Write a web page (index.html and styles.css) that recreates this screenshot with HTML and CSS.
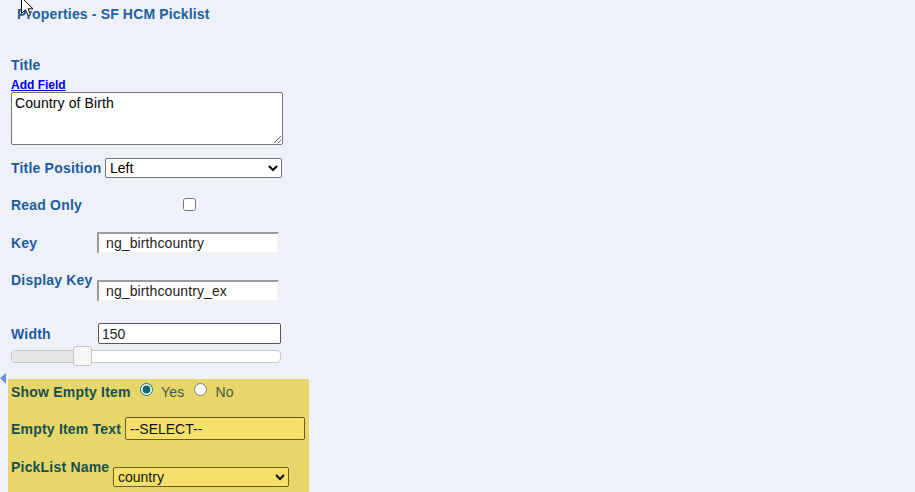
FILE: index.html
```html
<!DOCTYPE html>
<html lang="en">
<head>
  <meta charset="UTF-8">
  <title>Properties - SF HCM Picklist</title>
  <link rel="stylesheet" href="styles.css">
</head>
<body>

  <!-- ponteiro do mouse sobre o título -->
  <svg class="cursor" width="13" height="20" viewBox="0 0 13 20">
    <path d="M0.5 0.5 L0.5 16.5 L4.5 12.8 L7.2 18.8 L9.6 17.8 L7 11.8 L12 11.8 Z" fill="#fff" stroke="#000" stroke-width="1"/>
  </svg>

  <h2 class="panel-title">Properties - SF HCM Picklist</h2>

  <div class="props">
    <div class="lbl">Title</div>
    <a class="add-field" href="#">Add Field</a>
    <textarea class="title-text">Country of Birth</textarea>

    <div class="row row-pos">
      <span class="lbl">Title Position</span>
      <select class="sel-pos">
        <option>Left</option>
        <option>Top</option>
        <option>Right</option>
      </select>
    </div>

    <div class="row row-ro">
      <span class="lbl lbl-ro">Read Only</span>
      <input type="checkbox" class="chk">
    </div>

    <div class="row row-key">
      <span class="lbl lbl-key">Key</span>
      <input type="text" class="inset-input" value="ng_birthcountry">
    </div>

    <div class="row row-dkey">
      <span class="lbl lbl-key">Display Key</span>
      <input type="text" class="inset-input dkey-input" value="ng_birthcountry_ex">
    </div>

    <div class="row row-width">
      <span class="lbl lbl-width">Width</span>
      <input type="text" class="width-input" value="150">
    </div>

    <div class="slider">
      <div class="slider-range" style="width: 62px;"></div>
      <span class="slider-handle" style="left: 61px;"></span>
    </div>
  </div>

  <div class="highlight">
    <span class="toggle-arrow"></span>

    <div class="row row-empty">
      <span class="lbl lbl-empty">Show Empty Item</span>
      <input type="radio" name="empty" class="radio" checked>
      <span class="opt">Yes</span>
      <input type="radio" name="empty" class="radio radio-no">
      <span class="opt">No</span>
    </div>

    <div class="row row-etext">
      <span class="lbl lbl-etext">Empty Item Text</span>
      <input type="text" class="yellow-input" value="--SELECT--">
    </div>

    <div class="row row-plist">
      <span class="lbl lbl-plist">PickList Name</span>
      <select class="yellow-select">
        <option>country</option>
        <option>nationality</option>
      </select>
    </div>
  </div>

</body>
</html>
```

FILE: styles.css
```css
body {
  font-family: 'Liberation Sans', Arial, sans-serif;
  background: #eef2f8;
  color: #000;
  margin: 0;
  padding: 0;
  height: 492px;
  overflow: hidden;
  position: relative;
}

.cursor {
  position: absolute;
  left: 21px;
  top: -3px;
  z-index: 10;
}

.panel-title {
  margin: 0;
  padding: 5px 0 0 17px;
  font-size: 14px;
  line-height: 18px;
  font-weight: bold;
  letter-spacing: 0.15px;
  color: #22609c;
}

/* coluna de propriedades */
.props {
  padding-left: 11px;
  padding-top: 34px;
}

.lbl {
  display: block;
  font-size: 14px;
  line-height: 16px;
  font-weight: bold;
  letter-spacing: 0.2px;
  color: #1e5b9e;
  flex-shrink: 0;
}

.add-field {
  display: block;
  margin-top: 5px;
  height: 14px;
  font-size: 12px;
  line-height: 14px;
  font-weight: bold;
  color: #0000ee;
  text-decoration: underline;
  width: 56px;
}

.title-text {
  display: block;
  box-sizing: border-box;
  width: 272px;
  height: 53px;
  margin: 0;
  padding: 2px 3px;
  border: 1px solid #767676;
  border-radius: 2px;
  font-family: 'Liberation Sans', Arial, sans-serif;
  font-size: 14px;
  letter-spacing: 0.1px;
  background: #fff;
  color: #000;
}

.row {
  display: flex;
  align-items: center;
}

.row-pos {
  margin-top: 13px;
  height: 20px;
}

.row-pos .lbl {
  width: 94px;
}

.sel-pos {
  box-sizing: border-box;
  width: 177px;
  height: 20px;
  margin: 0;
  border: 1px solid #767676;
  border-radius: 2px;
  font-family: 'Liberation Sans', Arial, sans-serif;
  font-size: 14px;
  background: #fff;
  color: #000;
}

.row-ro {
  margin-top: 19px;
  height: 16px;
}

.lbl-ro {
  width: 172px;
}

.chk {
  width: 13px;
  height: 13px;
  margin: -1px 0 0 0;
}

.row-key {
  margin-top: 19px;
  height: 22px;
}

.lbl-key {
  width: 86px;
}

.inset-input {
  box-sizing: border-box;
  width: 182px;
  height: 22px;
  margin: 0;
  padding: 0 0 0 7px;
  border-width: 2px;
  border-style: solid;
  border-color: #9b9b9b #f2f2f2 #f2f2f2 #9b9b9b;
  font-family: 'Liberation Sans', Arial, sans-serif;
  font-size: 14px;
  letter-spacing: 0.1px;
  background: #fff;
  color: #222;
}

.row-dkey {
  margin-top: 18px;
  align-items: flex-start;
}

.dkey-input {
  margin-top: 8px;
}

.row-width {
  margin-top: 21px;
  height: 21px;
}

.lbl-width {
  width: 87px;
}

.width-input {
  box-sizing: border-box;
  width: 183px;
  height: 21px;
  margin: 0;
  padding: 0 3px;
  border: 1px solid #555;
  border-radius: 2px;
  font-family: 'Liberation Sans', Arial, sans-serif;
  font-size: 14px;
  background: #fff;
  color: #222;
}

/* slider estilo jquery ui */
.slider {
  position: relative;
  box-sizing: border-box;
  width: 270px;
  height: 13px;
  margin-top: 6px;
  border: 1px solid #c8c8c8;
  border-radius: 4px;
  background: #fff;
}

.slider-range {
  height: 100%;
  background: #e6e6e6;
  border-radius: 3px 0 0 3px;
}

.slider-handle {
  position: absolute;
  top: -5px;
  box-sizing: border-box;
  width: 19px;
  height: 20px;
  border: 1px solid #c5c5c5;
  border-radius: 3px;
  background: #f6f6f6;
}

/* bloco destacado em amarelo */
.highlight {
  position: relative;
  box-sizing: border-box;
  width: 301px;
  height: 130px;
  margin: 16px 0 0 8px;
  padding: 5px 0 0 3px;
  background: #e7d66a;
}

.toggle-arrow {
  position: absolute;
  left: -8px;
  top: -6px;
  width: 0;
  height: 0;
  border-top: 5px solid transparent;
  border-bottom: 6px solid transparent;
  border-right: 6px solid #6a8fe6;
}

.highlight .lbl {
  color: #17504a;
}

.row-empty {
  align-items: flex-start;
  height: 16px;
}

.lbl-empty {
  width: 124px;
}

.radio {
  width: 13px;
  height: 13px;
  margin: -1px 0 0 5px;
  accent-color: #0f6b6b;
}

.radio-no {
  margin-left: 10px;
}

.opt {
  margin-left: 8px;
  font-size: 14px;
  line-height: 16px;
  letter-spacing: 0.2px;
  color: #445a48;
}

.row-etext {
  margin-top: 17px;
  height: 23px;
}

.lbl-etext {
  width: 114px;
}

.yellow-input {
  box-sizing: border-box;
  width: 180px;
  height: 23px;
  margin: 0;
  padding: 0 4px;
  border: 1px solid #6e5e1e;
  border-radius: 2px;
  font-family: 'Liberation Sans', Arial, sans-serif;
  font-size: 14px;
  background: #f5e06b;
  color: #111;
}

.row-plist {
  margin-top: 19px;
  align-items: flex-start;
}

.lbl-plist {
  width: 102px;
}

.yellow-select {
  box-sizing: border-box;
  width: 176px;
  height: 20px;
  margin: 8px 0 0 0;
  border: 1px solid #6e5e1e;
  border-radius: 2px;
  font-family: 'Liberation Sans', Arial, sans-serif;
  font-size: 14px;
  background: #f5e06b;
  color: #111;
}
```
